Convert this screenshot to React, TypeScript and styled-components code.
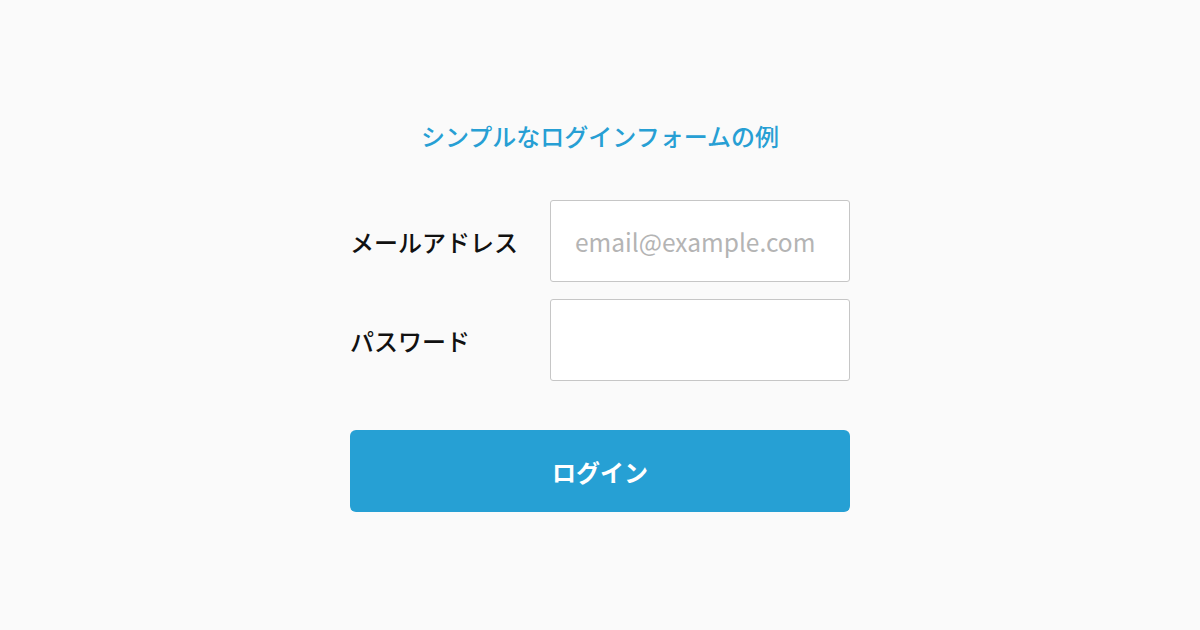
import styled, { createGlobalStyle } from 'styled-components';

const GlobalStyle = createGlobalStyle`
  html, body {
    margin: 0;
    padding: 0;
    background: #fafafa;
  }
  body {
    font-family: 'Noto Sans CJK JP', 'Noto Sans', sans-serif;
    color: #111;
  }
`;

export default function App() {
  return (
    <>
      <GlobalStyle />
      <Page>
        <Form onSubmit={(e) => e.preventDefault()}>
          <Title>シンプルなログインフォームの例</Title>
          <Fields>
            <Row>
              <Label htmlFor="email">メールアドレス</Label>
              <Input id="email" type="email" placeholder="email@example.com" />
            </Row>
            <Row>
              <Label htmlFor="password">パスワード</Label>
              <Input id="password" type="password" />
            </Row>
          </Fields>
          <SubmitButton type="submit">ログイン</SubmitButton>
        </Form>
      </Page>
    </>
  );
}

const Page = styled.main`
  display: flex;
  align-items: center;
  justify-content: center;
  min-height: 100vh;
`;

const Form = styled.form`
  display: flex;
  flex-direction: column;
  width: 500px;
`;

const Title = styled.h1`
  margin: 0 0 46px;
  font-size: 24px;
  line-height: 36px;
  font-weight: 500;
  color: #279fd4;
  text-align: center;
`;

const Fields = styled.div`
  display: flex;
  flex-direction: column;
  gap: 17px;
`;

const Row = styled.div`
  display: flex;
  align-items: center;
  justify-content: space-between;
`;

const Label = styled.label`
  font-size: 24px;
  font-weight: 500;
  color: #111;
`;

const Input = styled.input`
  box-sizing: border-box;
  width: 300px;
  height: 82px;
  padding: 0 24px;
  border: 1px solid #c6c6c6;
  border-radius: 3px;
  background: #fff;
  font-family: 'Noto Sans CJK JP', 'Noto Sans', sans-serif;
  font-size: 24.5px;
  font-weight: 400;
  color: #333;
  outline: none;

  &::placeholder {
    color: #b4b4b4;
  }
`;

const SubmitButton = styled.button`
  margin-top: 49px;
  height: 82px;
  border: none;
  border-radius: 6px;
  background: #26a0d4;
  color: #fff;
  font-family: 'Noto Sans CJK JP', sans-serif;
  font-size: 24px;
  font-weight: 700;
  cursor: pointer;
`;
